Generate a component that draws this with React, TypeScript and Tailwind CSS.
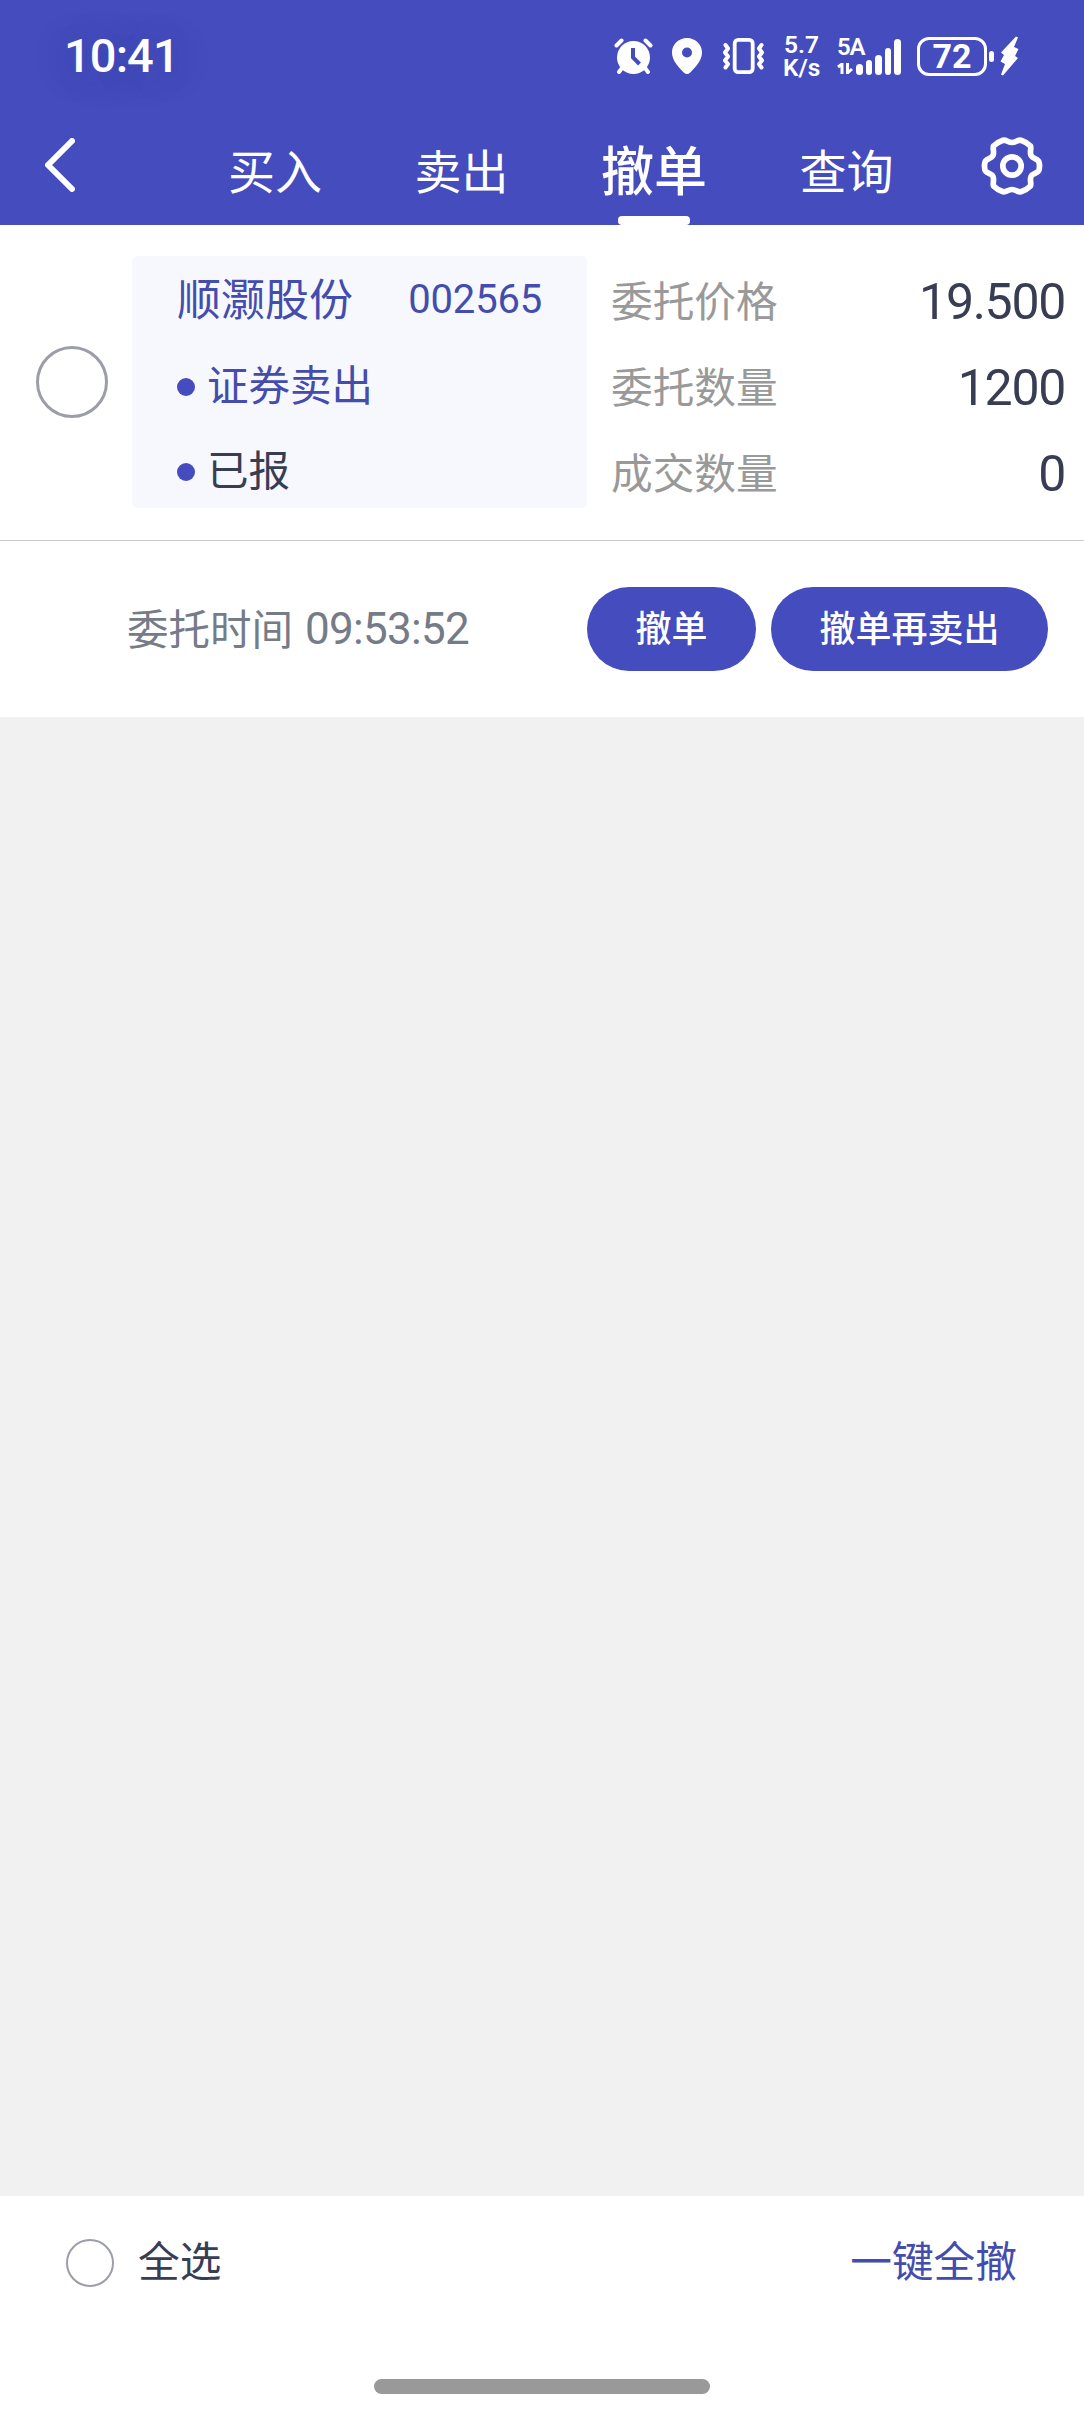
import clsx from 'clsx'

const TABS = ['买入', '卖出', '撤单', '查询']

const ORDER = {
  name: '顺灏股份',
  code: '002565',
  side: '证券卖出',
  status: '已报',
  time: '09:53:52',
  fields: [
    { label: '委托价格', value: '19.500' },
    { label: '委托数量', value: '1200' },
    { label: '成交数量', value: '0' },
  ],
}

export default function App() {
  return (
    <div className="flex h-[2412px] w-[1084px] flex-col overflow-hidden bg-[#f1f1f1] font-['Noto_Sans_CJK_SC',sans-serif] text-[#383d54]">
      <header className="h-[225px] bg-[#444cbe] text-white">
        <StatusBar />
        <NavBar active="撤单" />
      </header>
      <OrderCard />
      <div className="flex-1" />
      <BottomBar />
    </div>
  )
}

function StatusBar() {
  return (
    <div className="flex h-28 items-center justify-between pr-[65px] pl-[64px]">
      <span className="pb-[2px] font-[Roboto,sans-serif] text-[47px] leading-none font-medium tracking-[-0.900px] [text-shadow:0_4px_40px_rgba(50,50,90,0.25)]">
        10:41
      </span>
      <div className="flex items-center">
        <AlarmIcon />
        <PinIcon />
        <VibrateIcon />
        <div className="ml-[18px] w-[37px] text-center font-[Roboto,sans-serif] text-[24.500px] leading-[22px] font-semibold">
          <div className="mb-px">5.7</div>
          <div>K/s</div>
        </div>
        <SignalIcon />
        <Battery level={72} />
      </div>
    </div>
  )
}

function NavBar({ active }: { active: string }) {
  return (
    <nav className="flex h-[113px] items-start pl-[45px]">
      <svg className="mt-[26px] h-[54px] w-[30px]" viewBox="0 0 30 54" fill="none" stroke="white" strokeWidth="6" strokeLinecap="round" strokeLinejoin="round">
        <path d="M27 3L3 27L27 51" />
      </svg>
      <div className="ml-[153px] flex h-[113px] gap-[92.500px]">
        {TABS.map((tab) => (
          <div
            key={tab}
            className={clsx(
              'flex flex-col items-center justify-between whitespace-nowrap',
              tab === active ? 'text-[53px] font-medium' : 'text-[47px]',
            )}
          >
            <span className={clsx('leading-[70px]', tab === active ? 'mt-[21px]' : 'mt-[22px]')}>{tab}</span>
            {tab === active && <i className="h-[9px] w-[72px] rounded-[4px] bg-white" />}
          </div>
        ))}
      </div>
      <GearIcon />
    </nav>
  )
}

function OrderCard() {
  return (
    <section className="bg-white">
      <div className="flex h-[316px] items-start border-b border-[#cccccc] pt-[31px]">
        <i className="mt-[90px] ml-9 size-[72px] rounded-full border-[3px] border-[#9b9da9]" />
        <div className="ml-6 h-[252px] w-[455px] rounded-md bg-[#f6f8fd] px-[45px] text-[41.500px] text-[#444cae]">
          <div className="flex h-[86px] items-center justify-between">
            <span className="pb-[4px] text-[44px]">{ORDER.name}</span>
            <span className="pt-[2px] font-[Roboto,sans-serif] text-[40px] tracking-[-0.200px]">{ORDER.code}</span>
          </div>
          <div className="flex h-[86px] items-center">
            <Dot />
            <span className="pb-[3px]">{ORDER.side}</span>
          </div>
          <div className="flex h-[84px] items-center">
            <Dot />
            <span className="pb-[3px] text-[#383d54]">{ORDER.status}</span>
          </div>
        </div>
        <div className="mt-[2px] mr-[19px] ml-[24px] flex-1">
          {ORDER.fields.map((f) => (
            <div key={f.label} className="flex h-[86px] items-center justify-between">
              <span className="pb-[3px] text-[41.700px] text-[#999999]">{f.label}</span>
              <span className="pt-[2px] font-[Roboto,sans-serif] text-[50px] tracking-[-1.300px]">{f.value}</span>
            </div>
          ))}
        </div>
      </div>
      <div className="flex h-44 items-center pr-9 pl-[127px]">
        <span className="pb-[4px] text-[41.500px] text-[#757b87]">委托时间</span>
        <span className="ml-[12px] flex-1 font-[Roboto,sans-serif] text-[44px] tracking-[-0.700px] text-[#757b87]">{ORDER.time}</span>
        <ActionButton className="w-[169px]">撤单</ActionButton>
        <ActionButton className="ml-[15px] w-[277px]">撤单再卖出</ActionButton>
      </div>
    </section>
  )
}

function Dot() {
  return <i className="mt-[3px] mr-[12px] size-[18px] rounded-full bg-[#444cbe]" />
}

function ActionButton({ className, children }: { className: string; children: string }) {
  return (
    <button className={clsx('h-[84px] rounded-full bg-[#444cbe] pb-[6px] text-[36px] font-medium whitespace-nowrap text-white', className)}>
      {children}
    </button>
  )
}

function BottomBar() {
  return (
    <footer className="flex h-[216px] flex-col items-center justify-between bg-white pb-[18px]">
      <div className="flex h-[132px] w-full items-center pr-[67px] pl-[66px] text-[41.700px]">
        <i className="mt-px size-12 rounded-full border-2 border-[#9b9da9]" />
        <span className="ml-6 flex-1 pb-[5px]">全选</span>
        <span className="pb-[5px] text-[#444cae]">一键全撤</span>
      </div>
      <i className="h-[15px] w-[336px] rounded-full bg-[#999999]" />
    </footer>
  )
}

function AlarmIcon() {
  return (
    <svg className="h-[36px] w-[39px]" viewBox="0 0 39 36" fill="none" strokeLinecap="round">
      <circle cx="19.500" cy="19.500" r="16.500" fill="white" />
      <path d="M2.500 7.500L7.500 2.500M36.500 7.500L31.500 2.500M8 30L5 34M31 30L34 34" stroke="white" strokeWidth="4" />
      <path d="M19 10V19.500L25.500 26" stroke="#444cbe" strokeWidth="4" strokeLinecap="butt" />
    </svg>
  )
}

function PinIcon() {
  return (
    <svg className="ml-[19px] h-[36px] w-[30px]" viewBox="0 0 30 36">
      <path
        d="M15 0C6.500 0 0 6.500 0 14.500C0 23 7 29.500 12 34.700Q15 37.200 18 34.700C23 29.500 30 23 30 14.500C30 6.500 23.500 0 15 0ZM15 9.500A5 5 0 1 1 15 19.500A5 5 0 1 1 15 9.500Z"
        fill="white"
        fillRule="evenodd"
      />
    </svg>
  )
}

function VibrateIcon() {
  return (
    <svg className="ml-[20px] h-[36px] w-[43px]" viewBox="0 0 43 36" fill="none" stroke="white" strokeLinejoin="round" strokeLinecap="round">
      <rect x="12.700" y="1.900" width="18" height="32.200" rx="3.500" strokeWidth="3.800" />
      <path d="M3.500 7L6 10.500L3 14.500L6 18.500L3 22.500L6 26L3.500 29.500M39.500 7L37 10.500L40 14.500L37 18.500L40 22.500L37 26L39.500 29.500" strokeWidth="4" />
    </svg>
  )
}

function SignalIcon() {
  return (
    <div className="ml-[17px] flex h-[37px] w-[66px] items-end">
      <div className="h-[38px] w-[19px] font-[Roboto,sans-serif] text-[24px] leading-[20px] font-semibold tracking-[-1.300px]">
        <div className="h-[26px]">5A</div>
        <svg className="h-[11px] w-[16px]" viewBox="0 0 16 11" fill="none" stroke="white" strokeWidth="3">
          <path d="M1 4L5 1V11M10.500 0V10L15 6" />
        </svg>
      </div>
      <i className="mr-[3px] h-[11px] w-[6.500px] rounded-full bg-white" />
      <i className="mr-[3px] h-[15px] w-[6.500px] rounded-full bg-white" />
      <i className="mr-[3px] h-[20px] w-[6.500px] rounded-full bg-white" />
      <i className="mr-[3px] h-[27px] w-[6.500px] rounded-full bg-white" />
      <i className="h-[36px] w-[6.500px] rounded-full bg-white" />
    </div>
  )
}

function Battery({ level }: { level: number }) {
  return (
    <div className="ml-[14px] flex items-center">
      <span className="flex h-[39px] w-[70px] items-center justify-center rounded-[12px] border-[3px] border-white font-[Roboto,sans-serif] text-[34px] leading-none font-bold">
        {level}
      </span>
      <i className="ml-[2px] h-[11px] w-[5px] rounded-full bg-white" />
      <svg className="ml-[6px] h-[40px] w-[19px]" viewBox="0 0 19 40" fill="white">
        <path d="M16 0.500L1 16.500L4 19L0.500 25.500L5 28L1 38.500L3 39.500L18 22L15 20L18.500 13L14 11L18 1.500Z" />
      </svg>
    </div>
  )
}

function GearIcon() {
  return (
    <svg className="mt-[25px] ml-[87px] h-[58px] w-[62px]" viewBox="0 0 62 58" fill="none" stroke="white" strokeWidth="5.700" strokeLinejoin="round">
      <path d="M31 5.500C35 5.500 36.500 2.500 40 3.200C43 4.200 47 6.500 49.500 9C50.500 12 48.500 15 50 18.500C52 22.500 57 21.500 58 25Q59 29 58 33C57 36.500 52 35.500 50 39.500C48.500 43 50.500 46 49.500 49C47 51.500 43 53.800 40 54.800C36.500 55.500 35 52.500 31 52.500C27 52.500 25.500 55.500 22 54.800C19 53.800 15 51.500 12.500 49C11.500 46 13.500 43 12 39.500C10 35.500 5 36.500 4 33Q3 29 4 25C5 21.500 10 22.500 12 18.500C13.500 15 11.500 12 12.500 9C15 6.500 19 4.200 22 3.200C25.500 2.500 27 5.500 31 5.500Z" />
      <circle cx="31" cy="29" r="9.200" />
    </svg>
  )
}
